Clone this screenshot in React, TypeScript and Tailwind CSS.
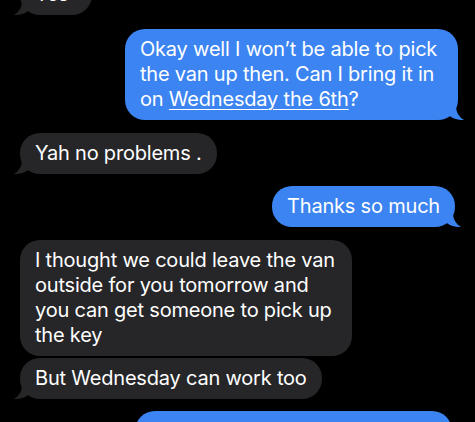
import React from "react";

const BLUE = "#3b84f1";
const GRAY = "#262628";

function TailRight({ color }: { color: string }) {
  return (
    <svg
      className="absolute -right-[6px] bottom-0"
      width="20"
      height="20"
      viewBox="0 0 20 20"
      aria-hidden
    >
      <path d="M0 0 H12 V6 C12 12 15 17 20 20 C13 20 8 18 4 15 C2 17 0 18 0 18 Z" fill={color} />
    </svg>
  );
}

function TailLeft({ color }: { color: string }) {
  return (
    <svg
      className="absolute -left-[6px] bottom-0"
      width="20"
      height="20"
      viewBox="0 0 20 20"
      aria-hidden
    >
      <path d="M20 0 H8 V6 C8 12 5 17 0 20 C7 20 12 18 16 15 C18 17 20 18 20 18 Z" fill={color} />
    </svg>
  );
}

function Sent({ children, tail = true, className = "" }: { children?: React.ReactNode; tail?: boolean; className?: string }) {
  return (
    <div className={`self-end mr-[17px] relative ${className}`}>
      <div className="relative z-10 rounded-[20px] bg-[#3b84f1] px-[15px] py-[8px] text-white">
        {children}
      </div>
      {tail && <TailRight color={BLUE} />}
    </div>
  );
}

function Received({ children, tail = true, className = "" }: { children?: React.ReactNode; tail?: boolean; className?: string }) {
  return (
    <div className={`self-start ml-[20px] relative ${className}`}>
      <div className="relative z-10 rounded-[20px] bg-[#262628] px-[15px] py-[8px] text-white">
        {children}
      </div>
      {tail && <TailLeft color={GRAY} />}
    </div>
  );
}

export default function App() {
  return (
    <div
      className="h-[422px] w-[475px] overflow-hidden bg-black text-[20px] leading-[25px] tracking-[-0.2px]"
      style={{ fontFamily: "Inter, 'Noto Sans', sans-serif" }}
    >
      <div className="flex flex-col">
        <Received className="-mt-[26px]">
          <span className="pr-[8px]">Yes</span>
        </Received>
        <Sent className="mt-[14px] w-[333px]">
          Okay well I won’t be able to pick the van up then. Can I bring it in on{" "}
          <span className="underline decoration-1 underline-offset-[3px]">Wednesday the 6th</span>?
        </Sent>
        <Received className="mt-[13px]">Yah no problems .</Received>
        <Sent className="mt-[12px] mr-[20px]">Thanks so much</Sent>
        <Received className="mt-[13px] w-[332px]" tail={false}>
          I thought we could leave the van outside for you tomorrow and you can get someone to pick up the key
        </Received>
        <Received className="mt-[2px]">But Wednesday can work too</Received>
        <Sent className="mt-[12px] mr-[23px] w-[317px]">
          <div className="h-[25px]" />
        </Sent>
      </div>
    </div>
  );
}
